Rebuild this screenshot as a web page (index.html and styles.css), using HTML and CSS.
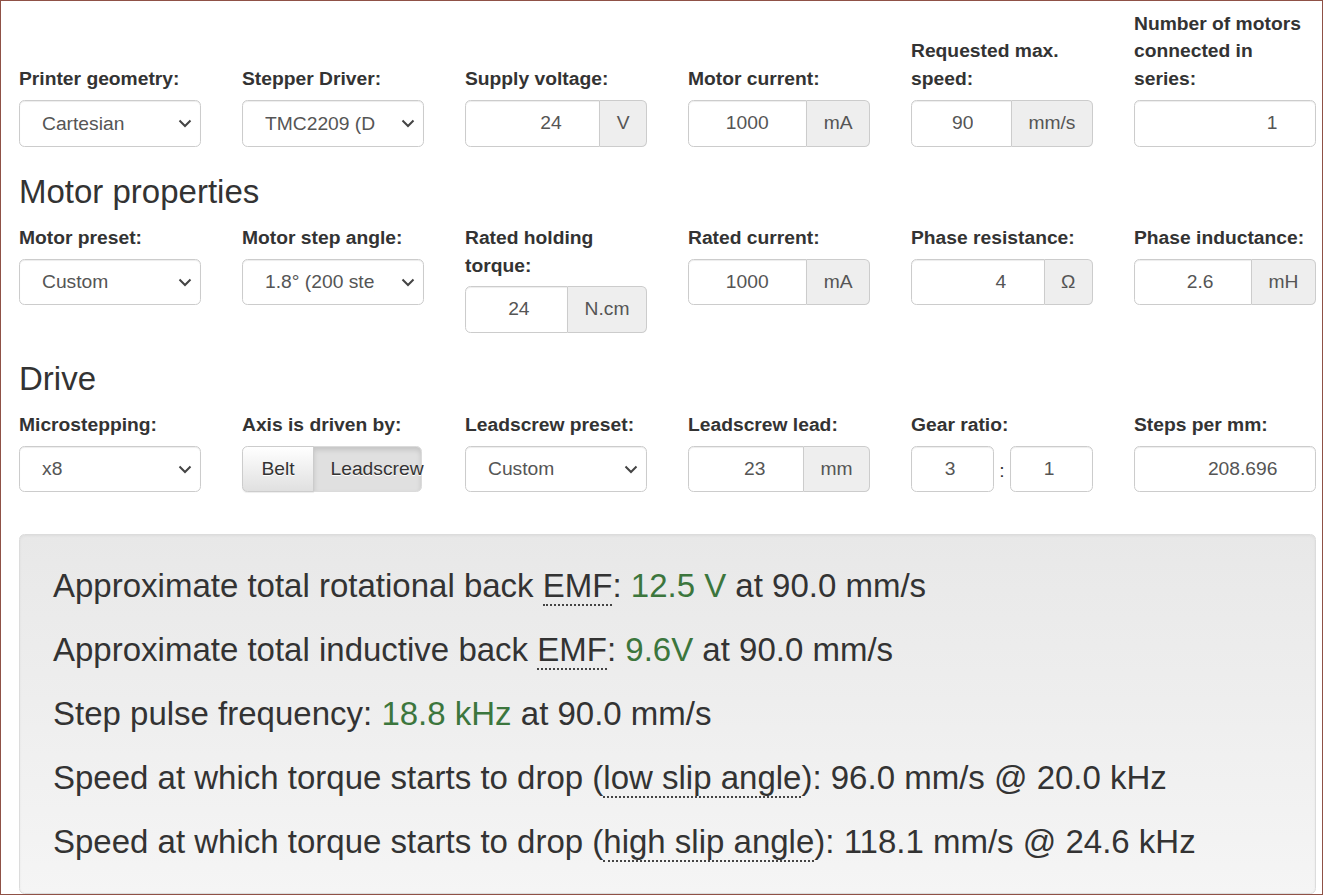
FILE: index.html
```html
<!DOCTYPE html>
<html lang="en">
<head>
<meta charset="utf-8">
<title>Stepper motor calculator</title>
<link rel="stylesheet" href="styles.css">
</head>
<body>
<div class="frame">
  <div class="container">
    <div class="row row-end">
      <div class="field">
        <label class="lbl">Printer geometry:</label>
        <span class="select-wrap">
          <select class="control select"><option>Cartesian</option></select>
          <svg class="chev" width="14" height="9" viewBox="0 0 14 9"><path d="M1.5 1.5 L7 7 L12.5 1.5" fill="none" stroke="#444" stroke-width="2"/></svg>
        </span>
      </div>
      <div class="field">
        <label class="lbl">Stepper Driver:</label>
        <span class="select-wrap">
          <select class="control select"><option>TMC2209 (Default)</option></select>
          <svg class="chev" width="14" height="9" viewBox="0 0 14 9"><path d="M1.5 1.5 L7 7 L12.5 1.5" fill="none" stroke="#444" stroke-width="2"/></svg>
        </span>
      </div>
      <div class="field">
        <label class="lbl">Supply voltage:</label>
        <div class="input-group"><input class="control num grp" type="text" value="24"><span class="addon">V</span></div>
      </div>
      <div class="field">
        <label class="lbl">Motor current:</label>
        <div class="input-group"><input class="control num grp" type="text" value="1000"><span class="addon">mA</span></div>
      </div>
      <div class="field">
        <label class="lbl">Requested max. speed:</label>
        <div class="input-group"><input class="control num grp" type="text" value="90"><span class="addon">mm/s</span></div>
      </div>
      <div class="field">
        <label class="lbl">Number of motors connected in series:</label>
        <input class="control num" type="text" value="1">
      </div>
    </div>

    <h3 class="section">Motor properties</h3>
    <div class="row row-start row-gap">
      <div class="field">
        <label class="lbl">Motor preset:</label>
        <span class="select-wrap">
          <select class="control select"><option>Custom</option></select>
          <svg class="chev" width="14" height="9" viewBox="0 0 14 9"><path d="M1.5 1.5 L7 7 L12.5 1.5" fill="none" stroke="#444" stroke-width="2"/></svg>
        </span>
      </div>
      <div class="field">
        <label class="lbl">Motor step angle:</label>
        <span class="select-wrap">
          <select class="control select"><option>1.8° (200 steps per revolution)</option></select>
          <svg class="chev" width="14" height="9" viewBox="0 0 14 9"><path d="M1.5 1.5 L7 7 L12.5 1.5" fill="none" stroke="#444" stroke-width="2"/></svg>
        </span>
      </div>
      <div class="field">
        <label class="lbl">Rated holding torque:</label>
        <div class="input-group"><input class="control num grp" type="text" value="24"><span class="addon">N.cm</span></div>
      </div>
      <div class="field">
        <label class="lbl">Rated current:</label>
        <div class="input-group"><input class="control num grp" type="text" value="1000"><span class="addon">mA</span></div>
      </div>
      <div class="field">
        <label class="lbl">Phase resistance:</label>
        <div class="input-group"><input class="control num grp" type="text" value="4"><span class="addon">Ω</span></div>
      </div>
      <div class="field">
        <label class="lbl">Phase inductance:</label>
        <div class="input-group"><input class="control num grp" type="text" value="2.6"><span class="addon">mH</span></div>
      </div>
    </div>

    <h3 class="section">Drive</h3>
    <div class="row row-start">
      <div class="field">
        <label class="lbl">Microstepping:</label>
        <span class="select-wrap">
          <select class="control select"><option>x8</option></select>
          <svg class="chev" width="14" height="9" viewBox="0 0 14 9"><path d="M1.5 1.5 L7 7 L12.5 1.5" fill="none" stroke="#444" stroke-width="2"/></svg>
        </span>
      </div>
      <div class="field">
        <label class="lbl">Axis is driven by:</label>
        <div class="btn-group">
          <button class="btn btn-belt" type="button">Belt</button>
          <button class="btn btn-lead active" type="button">Leadscrew</button>
        </div>
      </div>
      <div class="field">
        <label class="lbl">Leadscrew preset:</label>
        <span class="select-wrap">
          <select class="control select"><option>Custom</option></select>
          <svg class="chev" width="14" height="9" viewBox="0 0 14 9"><path d="M1.5 1.5 L7 7 L12.5 1.5" fill="none" stroke="#444" stroke-width="2"/></svg>
        </span>
      </div>
      <div class="field">
        <label class="lbl">Leadscrew lead:</label>
        <div class="input-group"><input class="control num grp" type="text" value="23"><span class="addon">mm</span></div>
      </div>
      <div class="field">
        <label class="lbl">Gear ratio:</label>
        <div class="ratio"><input class="control num" type="text" value="3"><span class="colon">:</span><input class="control num" type="text" value="1"></div>
      </div>
      <div class="field">
        <label class="lbl">Steps per mm:</label>
        <input class="control num" type="text" value="208.696">
      </div>
    </div>

    <div class="well">
      <h3 class="res">Approximate total rotational back <abbr title="Electromotive force">EMF</abbr>: <span class="ok">12.5 V</span> at 90.0 mm/s</h3>
      <h3 class="res">Approximate total inductive back <abbr title="Electromotive force">EMF</abbr>: <span class="ok">9.6V</span> at 90.0 mm/s</h3>
      <h3 class="res">Step pulse frequency: <span class="ok">18.8 kHz</span> at 90.0 mm/s</h3>
      <h3 class="res">Speed at which torque starts to drop (<abbr title="low slip angle">low slip angle</abbr>): 96.0 mm/s @ 20.0 kHz</h3>
      <h3 class="res">Speed at which torque starts to drop (<abbr title="high slip angle">high slip angle</abbr>): 118.1 mm/s @ 24.6 kHz</h3>
    </div>
  </div>
</div>
</body>
</html>
```

FILE: styles.css
```css
html, body {
  margin: 0;
  padding: 0;
  background: #fff;
}

body {
  font-family: "Liberation Sans", Arial, Helvetica, sans-serif;
  font-size: 19.25px;
  line-height: 27.5px;
  color: #333;
}

.frame {
  box-sizing: border-box;
  width: 1323px;
  height: 895px;
  border: 1px solid #8f5146;
  padding: 8.8px 0 0 18px;
  overflow: hidden;
}

.container {
  width: 1297px;
}

.row {
  display: grid;
  grid-template-columns: repeat(6, 182px);
  column-gap: 41px;
}

.row-end {
  align-items: end;
}

.row-start {
  align-items: start;
}

.row-gap {
  padding-bottom: 1px;
}

.field {
  display: flex;
  flex-direction: column;
  align-items: stretch;
}

.lbl {
  display: block;
  font-weight: bold;
  margin-bottom: 6.875px;
  line-height: 27.5px;
}

.row-end .lbl {
  margin-bottom: 7.6px;
}

.section {
  font-size: 33px;
  font-weight: normal;
  line-height: 36.3px;
  margin: 27.5px 0 13.75px;
  color: #333;
}

.control {
  box-sizing: border-box;
  display: block;
  width: 100%;
  height: 46.75px;
  margin: 0;
  padding: 8.25px 16.5px;
  font-family: "Liberation Sans", Arial, Helvetica, sans-serif;
  font-size: 19.25px;
  line-height: 27.5px;
  color: #555;
  background: #fff;
  border: 1px solid #ccc;
  border-radius: 5.5px;
  box-shadow: inset 0 1px 1px rgba(0, 0, 0, 0.075);
  outline: none;
}

.num {
  text-align: right;
  padding-right: 37.5px;
}

.select-wrap {
  position: relative;
  display: block;
}

.select {
  -webkit-appearance: none;
  appearance: none;
  padding: 0 48px 0 22px;
  white-space: nowrap;
  overflow: hidden;
}

.chev {
  position: absolute;
  right: 9px;
  top: 19px;
  pointer-events: none;
}

.input-group {
  display: flex;
  width: 100%;
}

.input-group .grp {
  flex: 1 1 auto;
  min-width: 0;
  width: auto;
  border-top-right-radius: 0;
  border-bottom-right-radius: 0;
}

.addon {
  box-sizing: border-box;
  height: 46.75px;
  padding: 8.25px 16.5px;
  font-size: 19.25px;
  line-height: 28.25px;
  color: #555;
  background: #eee;
  border: 1px solid #ccc;
  border-left: 0;
  border-radius: 0 5.5px 5.5px 0;
  white-space: nowrap;
  text-align: center;
}

.ratio {
  display: flex;
  align-items: center;
}

.ratio .control {
  flex: 1 1 0;
  min-width: 0;
  width: auto;
}

.colon {
  padding: 4px 5.3px 0;
  color: #333;
}

.btn-group {
  display: flex;
  width: 180px;
}

.btn {
  box-sizing: border-box;
  height: 46.75px;
  margin: 0;
  padding: 8.25px 16.5px;
  font-family: "Liberation Sans", Arial, Helvetica, sans-serif;
  font-size: 19.25px;
  line-height: 27.5px;
  color: #333;
  border: 1px solid #ccc;
  text-shadow: 0 1px 0 #fff;
  white-space: nowrap;
  overflow: visible;
  cursor: pointer;
}

.btn-belt {
  width: 72px;
  padding: 8.25px 0;
  text-align: center;
  border-radius: 5.5px 0 0 5.5px;
  background-image: linear-gradient(to bottom, #fff 0, #e0e0e0 100%);
  box-shadow: inset 0 1px 0 rgba(255, 255, 255, 0.15), 0 1px 1px rgba(0, 0, 0, 0.075);
  position: relative;
  z-index: 1;
}

.btn-lead {
  width: 109px;
  margin-left: -1px;
  text-align: left;
  border-radius: 0 5.5px 5.5px 0;
}

.btn-lead.active {
  background: #e0e0e0;
  border-color: #dbdbdb;
  box-shadow: inset 0 3px 5px rgba(0, 0, 0, 0.125);
}

.well {
  box-sizing: border-box;
  margin-top: 41.5px;
  padding: 19px 19px 19px 33px;
  border: 1px solid #dcdcdc;
  border-radius: 5.5px;
  background-image: linear-gradient(to bottom, #e8e8e8 0, #f5f5f5 100%);
  box-shadow: inset 0 1px 3px rgba(0, 0, 0, 0.05), 0 1px 0 rgba(255, 255, 255, 0.1);
}

.res {
  font-size: 33px;
  font-weight: normal;
  line-height: 36.3px;
  margin: 27.5px 0 13.75px;
  color: #333;
  white-space: nowrap;
}

.res:first-child {
  margin-top: 14.5px;
}

.ok {
  color: #3c763d;
}

abbr {
  text-decoration: none;
  border-bottom: 2px dotted #444;
  cursor: help;
}
```
